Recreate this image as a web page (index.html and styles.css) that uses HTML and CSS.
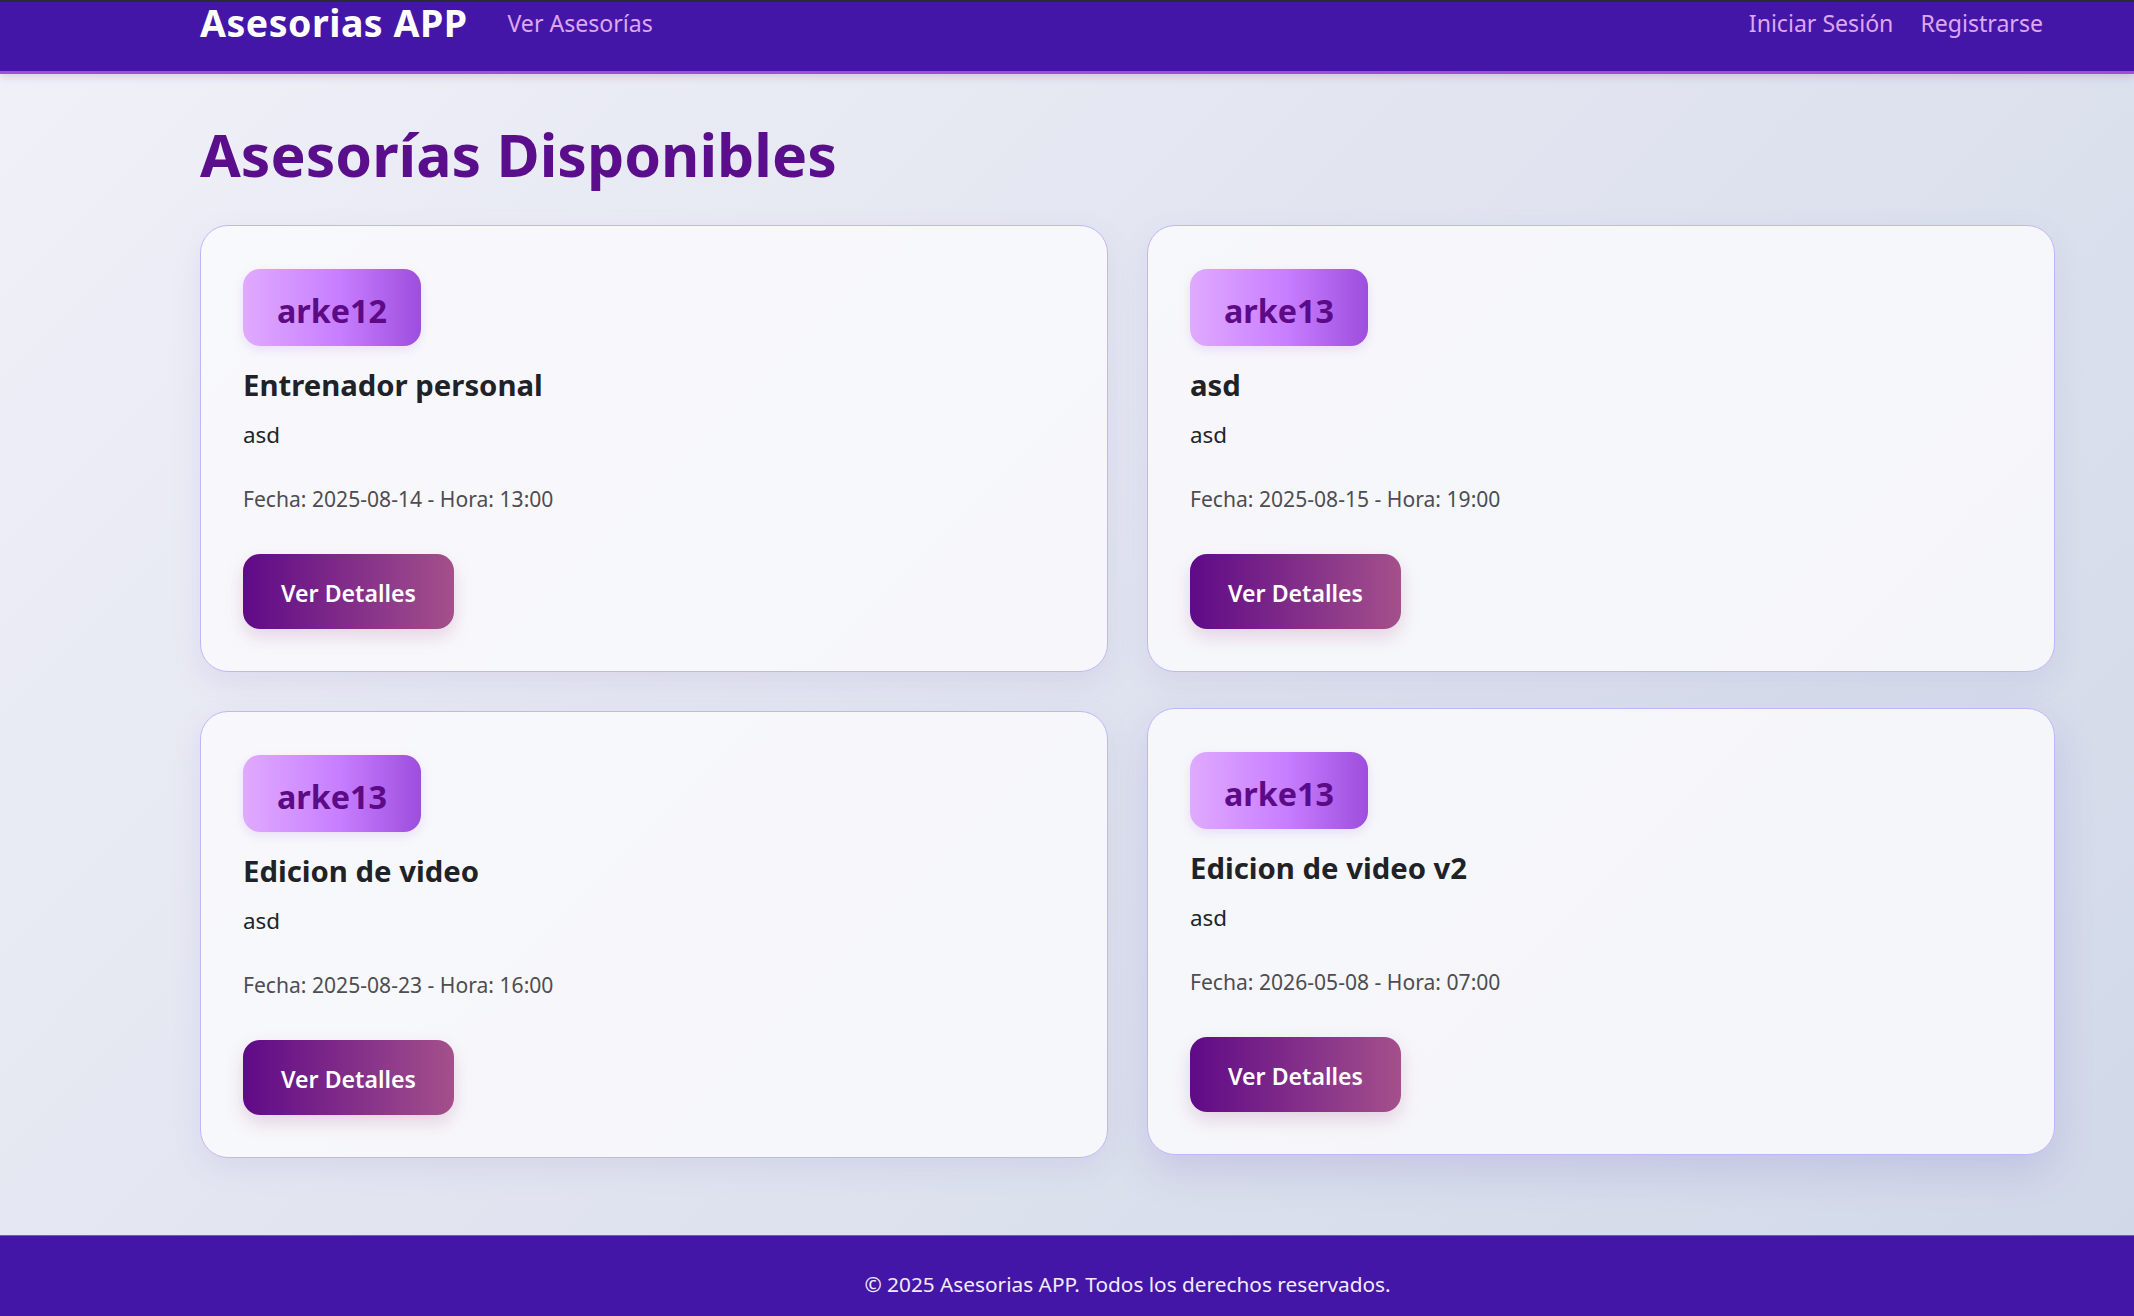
FILE: index.html
```html
<!DOCTYPE html>
<html lang="es">
<head>
<meta charset="utf-8">
<title>Asesorias APP</title>
<link rel="stylesheet" href="styles.css">
</head>
<body>
<nav class="navbar">
  <div class="nav-left">
    <a class="brand" href="#">Asesorias APP</a>
    <a class="nav-link" href="#">Ver Asesorías</a>
  </div>
  <div class="nav-right">
    <a class="nav-link" href="#">Iniciar Sesión</a>
    <a class="nav-link" href="#">Registrarse</a>
  </div>
</nav>
<main class="content">
  <h1 class="page-title">Asesorías Disponibles</h1>
  <div class="grid">
    <div class="card">
      <span class="badge">arke12</span>
      <h2 class="card-title">Entrenador personal</h2>
      <p class="card-desc">asd</p>
      <p class="card-meta">Fecha: 2025-08-14 - Hora: 13:00</p>
      <a class="btn" href="#">Ver Detalles</a>
    </div>
    <div class="card">
      <span class="badge">arke13</span>
      <h2 class="card-title">asd</h2>
      <p class="card-desc">asd</p>
      <p class="card-meta">Fecha: 2025-08-15 - Hora: 19:00</p>
      <a class="btn" href="#">Ver Detalles</a>
    </div>
    <div class="card">
      <span class="badge">arke13</span>
      <h2 class="card-title">Edicion de video</h2>
      <p class="card-desc">asd</p>
      <p class="card-meta">Fecha: 2025-08-23 - Hora: 16:00</p>
      <a class="btn" href="#">Ver Detalles</a>
    </div>
    <div class="card card-hover">
      <span class="badge">arke13</span>
      <h2 class="card-title">Edicion de video v2</h2>
      <p class="card-desc">asd</p>
      <p class="card-meta">Fecha: 2026-05-08 - Hora: 07:00</p>
      <a class="btn" href="#">Ver Detalles</a>
    </div>
  </div>
</main>
<footer class="footer">
  <p>© 2025 Asesorias APP. Todos los derechos reservados.</p>
</footer>
</body>
</html>
```

FILE: styles.css
```css
* { box-sizing: border-box; }
html, body { margin: 0; padding: 0; }
body {
  font-family: "Noto Sans", "Open Sans", sans-serif;
  min-height: 100vh;
  display: flex;
  flex-direction: column;
  background: linear-gradient(135deg, #f0f1f8 0%, #e2e5f0 45%, #d0d8e8 100%);
  color: #212529;
}
a { text-decoration: none; }

.navbar {
  border-top: 2px solid #2b2a33;
  background: #4416a7;
  border-bottom: 3px solid #9d4edd;
  height: 74px;
  padding: 0 91px 0 200px;
  display: flex;
  justify-content: space-between;
  align-items: flex-start;
  box-shadow: 0 3px 8px rgba(60, 40, 120, 0.15);
}
.nav-left, .nav-right { display: flex; align-items: flex-start; }
.nav-left { gap: 40px; }
.nav-right { gap: 27px; }
.brand {
  color: #ffffff;
  font-weight: 700;
  font-size: 37.5px;
  line-height: 41px;
  letter-spacing: 0.5px;
}
.nav-link {
  color: #dfa6f2;
  font-size: 23.1px;
  line-height: 42px;
}

.content {
  flex: 1;
  padding: 0 79px 77px 200px;
}
.page-title {
  margin: 40px 0 31px;
  font-size: 59px;
  line-height: 80px;
  font-weight: 700;
  color: #5b0e8c;
}
.grid {
  display: grid;
  grid-template-columns: 1fr 1fr;
  gap: 39px;
}
.card {
  background: rgba(250, 250, 253, 0.85);
  border: 1px solid #c0b4fc;
  border-radius: 28px;
  padding: 43px 42px 42px;
  display: flex;
  flex-direction: column;
  align-items: flex-start;
  box-shadow: 0 10px 30px rgba(110, 90, 190, 0.10);
}
.card-hover {
  transform: translateY(-3px);
  box-shadow: 0 16px 40px rgba(110, 90, 190, 0.18);
}
.badge {
  height: 77px;
  padding: 5px 34px 0;
  display: flex;
  align-items: center;
  border-radius: 17px;
  background: linear-gradient(90deg, #e0aaff 0%, #c77dff 55%, #9d4edd 100%);
  color: #5d0a86;
  font-weight: 700;
  font-size: 32.3px;
  box-shadow: 0 4px 12px rgba(157, 78, 221, 0.15);
}
.card-title {
  margin: 21px 0 0;
  font-size: 29.3px;
  line-height: 36px;
  font-weight: 700;
  color: #1f2328;
}
.card-desc {
  margin: 17px 0 0;
  font-size: 22.4px;
  line-height: 30px;
  color: #212529;
}
.card-meta {
  margin: 35px 0 0;
  font-size: 21.1px;
  line-height: 28px;
  color: #4d4d52;
}
.btn {
  margin-top: 41px;
  height: 75px;
  padding: 2px 38px 0;
  display: flex;
  align-items: center;
  border-radius: 17px;
  background: linear-gradient(90deg, #5f0a87 0%, #a4508b 100%);
  color: #ffffff;
  font-size: 23.1px;
  font-weight: 600;
  box-shadow: 0 8px 18px rgba(164, 80, 139, 0.22);
}

.footer {
  background: #4416a7;
  border-top: 1px solid #6b6b7a;
  height: 81px;
  padding: 34px 79px 0 200px;
}
.footer p {
  margin: 0;
  text-align: center;
  color: #f1ecff;
  font-size: 20.8px;
  line-height: 28px;
}
```
